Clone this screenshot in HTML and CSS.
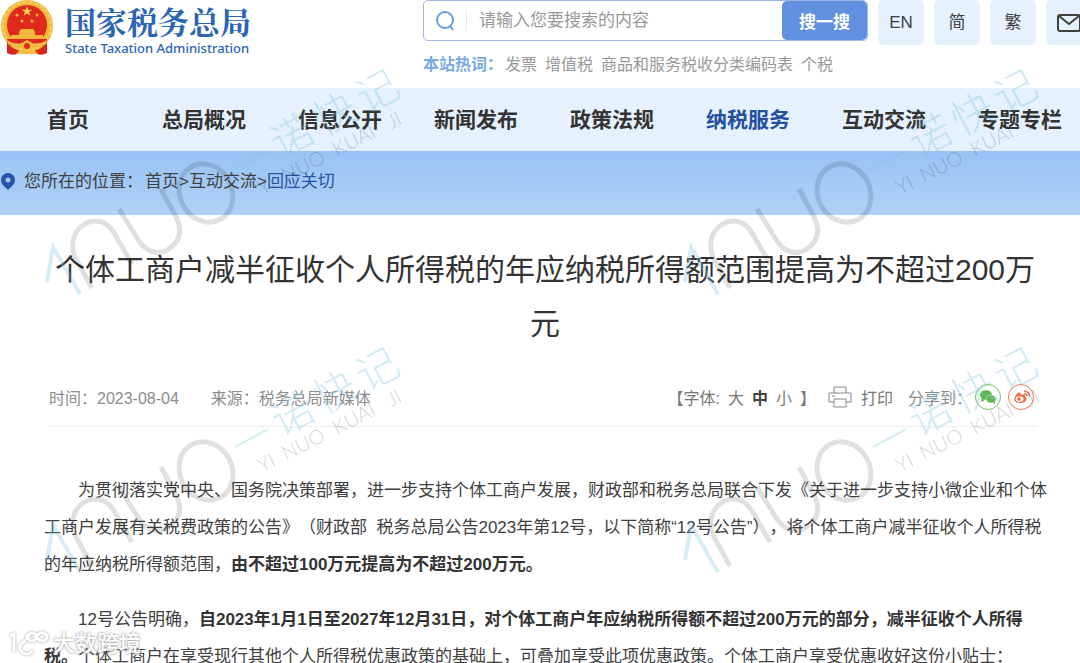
FILE: index.html
```html
<!DOCTYPE html>
<html lang="zh-CN">
<head>
<meta charset="utf-8">
<meta name="viewport" content="width=device-width, initial-scale=1">
<title>国家税务总局</title>
<link rel="stylesheet" href="styles.css">
</head>
<body>
<header class="header">
  <a class="brand" href="#">
    <svg class="emblem" viewBox="0 0 54 56" aria-hidden="true">
      <path d="M7 36V53q5 3 10 1h20q5 2 10-1V36z" fill="#d8261c"/>
      <circle cx="27" cy="26" r="26" fill="#f0b93c"/>
      <circle cx="27" cy="26" r="24" fill="none" stroke="#f8d060" stroke-width="2" stroke-dasharray="4 2"/>
      <circle cx="27" cy="25" r="20" fill="#e0281c"/>
      <path d="M27 6l1.300 3.700h3.900l-3.100 2.300 1.200 3.700-3.300-2.300-3.300 2.300 1.200-3.700-3.100-2.300h3.900z" fill="#f8cf4f"/>
      <g fill="#f5b83c"><circle cx="17" cy="15" r="1.500"/><circle cx="37" cy="15" r="1.500"/><circle cx="22" cy="21" r="1.500"/><circle cx="32" cy="21" r="1.500"/>
      <path d="M21 29h12l2 3H19zM19 32h16v3H19zM11 35h32v4H11z"/></g>
      <path d="M7 39h40v5q-10 4-14 2l-6-3-6 3q-4 2-14-2z" fill="#e0281c"/>
      <path d="M7 40q8 5 15 3l5-3 5 3q7 2 15-3l-1 4q-8 5-14 2l-5-3-5 3q-6 3-14-2z" fill="#f3bd3f"/>
      <circle cx="27" cy="46" r="4" fill="#e0281c" stroke="#f3bd3f" stroke-width="2"/>
      <path d="M16 54l4-4h14l4 4z" fill="#f3bd3f"/>
    </svg>
    <span class="brand-text">
      <span class="brand-name">国家税务总局</span>
      <span class="brand-en">State Taxation Administration</span>
    </span>
  </a>
  <div class="search">
    <form class="search-form">
      <label class="search-label" for="q" aria-label="搜索">
        <svg class="search-icon" viewBox="0 0 20 22"><circle cx="9" cy="10" r="8"/><path d="M14 16l3 4"/></svg>
      </label>
      <input class="search-input" id="q" type="text" placeholder="请输入您要搜索的内容">
      <button class="search-button" type="button">搜一搜</button>
    </form>
    <div class="hot">
      <strong class="hot-title">本站热词：</strong>
      <a href="#">发票</a><a href="#">增值税</a><a href="#">商品和服务税收分类编码表</a><a href="#">个税</a>
    </div>
  </div>
  <div class="tools">
    <a class="tool" href="#">EN</a>
    <a class="tool" href="#">简</a>
    <a class="tool" href="#">繁</a>
    <a class="tool" href="#" aria-label="邮箱"><svg class="mail-icon" viewBox="0 0 24 18"><rect x="1" y="1" width="22" height="16" rx="2"/><path d="M2 2l10 8 10-8"/></svg></a>
  </div>
</header>
<nav class="nav">
  <a href="#">首页</a><a href="#">总局概况</a><a href="#">信息公开</a><a href="#">新闻发布</a><a href="#">政策法规</a><a class="active" href="#">纳税服务</a><a href="#">互动交流</a><a href="#">专题专栏</a>
</nav>
<div class="crumbs">
  <svg class="pin" viewBox="0 0 14 18" aria-hidden="true"><path d="M7 0a7 7 0 0 1 7 7c0 4-4 7-7 10C4 14 0 11 0 7a7 7 0 0 1 7-7z" fill="#2455a8"/><circle cx="7" cy="7" r="2.500" fill="#a5caf5"/></svg>
  <span class="crumbs-label">您所在的位置：</span>
  <span><a href="#">首页</a>&gt;<a href="#">互动交流</a>&gt;<a class="current" href="#">回应关切</a></span>
</div>
<main class="article">
  <h1 class="title">个体工商户减半征收个人所得税的年应纳税所得额范围提高为不超过200万元</h1>
  <div class="meta">
    <span class="date">时间：2023-08-04</span>
    <span class="source">来源：税务总局新媒体</span>
    <span class="sizes">【字体: <button type="button">大</button><button class="chosen" type="button">中</button><button type="button">小</button>】</span>
    <button class="print" type="button">
      <svg class="print-icon" viewBox="0 0 24 22"><path d="M6 7V1h12v6M6 16H1V7h22v9h-5M6 13h12v8H6zM4 10h3"/></svg>打印
    </button>
    <span class="share-label">分享到：</span>
    <a class="share" href="#" aria-label="微信"><svg viewBox="0 0 26 26"><circle cx="13" cy="13" r="12.500" fill="#fff" stroke="#72c353"/><ellipse cx="11" cy="11" rx="6" ry="4.800" fill="#5cb947"/><path d="M7 14l-1 4 4-2z" fill="#5cb947"/><ellipse cx="16" cy="15" rx="5" ry="4" fill="#5cb947" stroke="#fff" stroke-width=".5"/><path d="M18 18l2 2v-3z" fill="#5cb947"/></svg></a>
    <a class="share" href="#" aria-label="微博"><svg viewBox="0 0 26 26"><circle cx="13" cy="13" r="12.500" fill="#fff" stroke="#f0794f"/><path d="M10 9c2-1 3 0 3 2 3-1 5 0 4 2 3 1 2 6-5 6-5 0-7-3-5-6q1-3 3-4z" fill="#f06a42"/><ellipse cx="11.500" cy="15" rx="4" ry="2.800" fill="#fff"/><circle cx="11" cy="15" r="1.700" fill="#f06a42"/><path d="M16 9.500q3 0 3 3M16 7q5 0 5.500 5.500" fill="none" stroke="#f06a42" stroke-width="1.300"/></svg></a>
  </div>
  <div class="content">
    <p>为贯彻落实党中央、国务院决策部署，进一步支持个体工商户发展，财政部和税务总局联合下发《关于进一步支持小微企业和个体工商户发展有关税费政策的公告》（财政部&nbsp; 税务总局公告2023年第12号，以下简称“12号公告”），将个体工商户减半征收个人所得税的年应纳税所得额范围，<strong>由不超过100万元提高为不超过200万元。</strong></p>
    <p>12号公告明确，<strong>自2023年1月1日至2027年12月31日，对个体工商户年应纳税所得额不超过200万元的部分，减半征收个人所得税。</strong>个体工商户在享受现行其他个人所得税优惠政策的基础上，可叠加享受此项优惠政策。个体工商户享受优惠收好这份小贴士：</p>
  </div>
</main>
<svg class="watermarks" width="1080" height="663" aria-hidden="true">
  <defs>
    <g id="mark">
      <path class="wm-blue" d="M47 282L53 247L80 294"/>
      <path class="wm-gray" d="M92 288L76 259C68 243 75 227 89 222C102 218 110 226 114 233L132 264"/>
      <path class="wm-gray" d="M119 209L139 241C147 253 160 256 170 248C181 240 182 229 176 217L161 189"/>
      <ellipse class="wm-gray" cx="206" cy="193" rx="26" ry="30" transform="rotate(-28 206 193)"/>
      <path class="wm-line" d="M235 169L268 151"/>
      <g transform="translate(291 138) rotate(-28)"><text class="wm-cn" x="-19 29 77" y="14">诺快记</text></g>
      <g transform="translate(262 195) rotate(-27)"><text class="wm-en"><tspan x="0">YI</tspan><tspan x="27">NUO</tspan><tspan x="84">KUAI</tspan><tspan x="145">JI</tspan></text></g>
    </g>
  </defs>
  <use href="#mark"/><use href="#mark" x="638"/><use href="#mark" y="278"/><use href="#mark" x="638" y="278"/>
</svg>
<div class="stamp" aria-hidden="true">
  <svg class="stamp-logo" viewBox="0 0 40 26"><path d="M1 5l4-2v18M17 9l-4 3q-3 3-2 6 2 5 7 5 4 0 5-4M18 9V3"/><circle cx="23" cy="6" r="4"/><path d="M27 6q3-5 7-4 4 1 4 4t-4 4q-4 0-7-4z"/></svg>
  <span>大数跨境</span>
</div>
</body>
</html>
```
FILE: styles.css
```css
* { box-sizing: border-box; }
body {
  margin: 0;
  height: 100vh;
  overflow: hidden;
  position: relative;
  background: #fff;
  color: #404040;
  font-family: "Liberation Sans", "Noto Sans CJK SC", sans-serif;
  font-size: 17px;
  text-spacing-trim: space-all;
}
a { color: inherit; text-decoration: none; }
button { border: 0; padding: 0; background: none; color: inherit; font: inherit; }
.header { display: flex; height: 88px; overflow: hidden; }
.brand { display: flex; flex: 0 0 423px; gap: 11px; color: #2b66b5; }
.emblem { width: 54px; height: 56px; }
.brand-text { display: flex; flex-direction: column; }
.brand-name {
  font-family: "Noto Serif CJK SC", "Noto Sans CJK SC", serif;
  font-size: 31px;
  font-weight: 700;
  line-height: 42px;
}
.brand-en { font-family: "Noto Sans", sans-serif; font-size: 13px; font-weight: 500; line-height: 13px; }
.search { flex: 0 0 445px; }
.search-form {
  display: flex;
  height: 41px;
  border: 1px solid #9db9e2;
  border-radius: 5px;
}
.search-label { display: flex; align-items: center; padding: 0 10px 0 12px; }
.search-icon { width: 20px; height: 22px; fill: none; stroke: #6a9fe0; stroke-width: 2; }
.search-input {
  flex: 1;
  min-width: 0;
  align-self: center;
  height: 21px;
  padding: 0 0 0 12px;
  border: 0;
  border-left: 1px solid #e8e8e8;
  outline: 0;
  background: none;
  font: inherit;
}
.search-input::placeholder { color: #999; }
.search-button {
  width: 85px;
  border-radius: 5px;
  background: #6090de;
  color: #fff;
  font-weight: 700;
}
.hot { display: flex; gap: 8px; color: #999; font-size: 16px; line-height: 24px; margin-top: 12px; white-space: nowrap; }
.hot-title { color: #78aae2; margin-right: -6px; }
.tools { display: flex; gap: 10px; margin-left: 10px; }
.tool {
  display: flex;
  flex: 0 0 46px;
  height: 45px;
  align-items: center;
  justify-content: center;
  border-radius: 5px;
  background: #e5f1ff;
  line-height: 20px;
}
.mail-icon { width: 24px; height: 18px; fill: none; stroke: #404040; stroke-width: 2; }
.nav {
  display: grid;
  grid-template-columns: repeat(8, 136px);
  height: 63px;
  overflow: hidden;
  background: #e5f1ff;
  color: #333;
  font-size: 21px;
  font-weight: 700;
  line-height: 63px;
  text-align: center;
}
.nav .active { color: #234f9e; }
.crumbs {
  display: flex;
  align-items: center;
  height: 64px;
  padding: 0 0 2px 1px;
  background: linear-gradient(#98c3f4, #b0d1f8);
  line-height: 20px;
}
.pin { width: 14px; height: 18px; margin-right: 9px; }
.crumbs-label { margin-right: 2px; }
.crumbs .current { color: #2653a3; }
.article { padding: 28px 32px 0 44px; }
.title {
  margin: 0;
  padding: 0 2px 0 0;
  color: #333;
  font-size: 30px;
  font-weight: 400;
  line-height: 54px;
  text-align: center;
}
.meta {
  display: flex;
  align-items: center;
  height: 58px;
  margin: 18px 11px 0 5px;
  padding-bottom: 2px;
  border-bottom: 1px solid #eee;
  color: #8c8c8c;
  font-size: 16px;
}
.date { margin-right: 32px; }
.sizes { display: flex; gap: 8px; margin-left: auto; color: #777; }
.sizes .chosen { font-weight: 700; color: #444; }
.print { display: flex; align-items: center; gap: 9px; margin-left: 12px; color: #777; }
.print-icon { width: 24px; height: 22px; fill: none; stroke: #888; stroke-width: 1; }
.share-label { margin-left: 15px; }
.share { width: 26px; height: 26px; margin-left: 7px; }
.share-label + .share { margin-left: 3px; }
.share:last-child { margin-right: 3px; }
.content { margin-top: 45px; line-height: 37px; }
.content p { margin: 0 0 18px; text-indent: 2em; }
.content strong { color: #333; }
.watermarks { position: absolute; top: 0; left: 0; pointer-events: none; }
.wm-blue, .wm-line { fill: none; stroke: #7cc4e0; stroke-opacity: .3; stroke-width: 4; }
.wm-line { stroke-width: 2; }
.wm-gray { fill: none; stroke: #000; stroke-opacity: .12; stroke-width: 5; }
.wm-cn { fill: #7cc4e0; fill-opacity: .35; font-family: "Noto Sans CJK SC", sans-serif; font-size: 42px; font-weight: 300; }
.wm-en { fill: #000; fill-opacity: .2; font-family: Lato, sans-serif; font-size: 20px; font-weight: 300; }
.stamp {
  position: absolute;
  left: 9px;
  bottom: 6px;
  display: flex;
  align-items: center;
  gap: 4px;
  color: #fff;
  font-size: 22px;
  font-weight: 500;
  line-height: 26px;
  text-shadow: 0 0 2px #aaa, 0 0 3px #aaa;
}
.stamp-logo { width: 40px; height: 26px; fill: none; stroke: #fff; stroke-width: 3; filter: drop-shadow(0 0 1px #999); }
```
